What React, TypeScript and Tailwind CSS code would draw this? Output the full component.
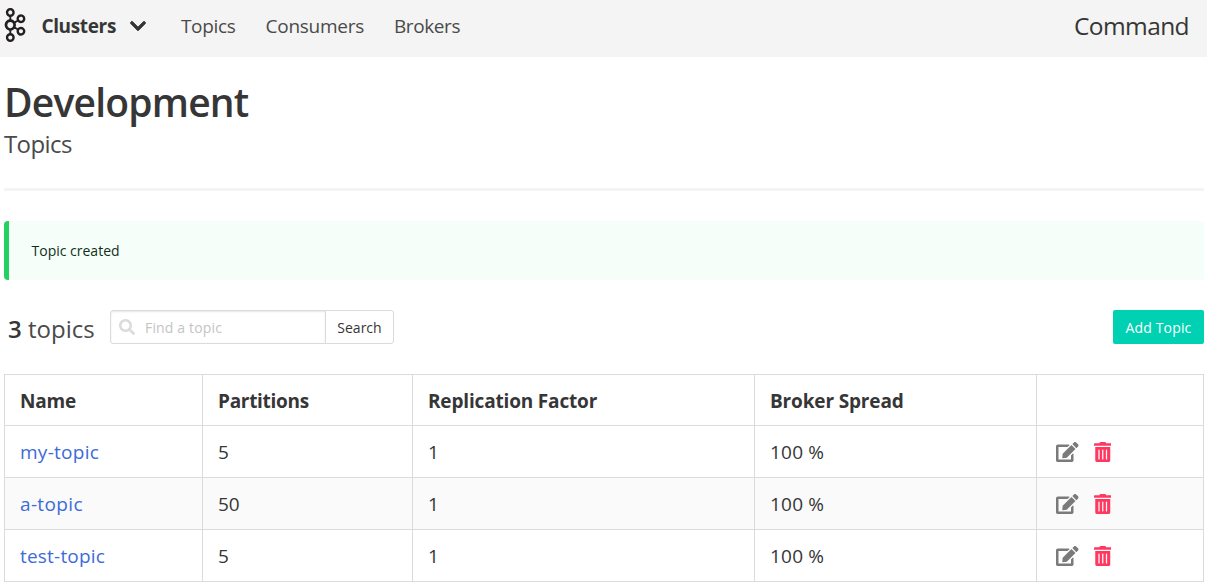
import { FaChevronDown, FaEdit, FaSearch, FaTrashAlt } from "react-icons/fa";
import { SiApachekafka } from "react-icons/si";

const topics = [
  { name: "my-topic", partitions: 5, replication: 1, spread: "100 %", link: "tracking-[0.28px]" },
  { name: "a-topic", partitions: 50, replication: 1, spread: "100 %", link: "tracking-[0.35px]" },
  { name: "test-topic", partitions: 5, replication: 1, spread: "100 %", link: "tracking-[0.2px]" },
];

function Navbar() {
  return (
    <nav className="flex h-[57px] items-center bg-[#f4f4f4] pb-[5px] text-[19px] text-[#4a4a4a]">
      <SiApachekafka className="-ml-[1.6px] mt-[-2px] size-[34px] shrink-0 text-[#231f20]" />
      <a className="ml-[9px] w-[87.6px] font-bold tracking-[-0.35px] text-[#363636]">
        <span>Clusters</span>
      </a>
      <FaChevronDown className="size-[18px] shrink-0 stroke-[#363636] stroke-[22px] text-[#363636]" />
      <a className="ml-[34px] w-[84.5px] tracking-[-0.35px]"><span>Topics</span></a>
      <a className="w-[128.5px] tracking-[-0.25px]"><span>Consumers</span></a>
      <a className="tracking-[-0.4px]"><span>Brokers</span></a>
      <span className="ml-auto mr-[18px] text-[24.5px] tracking-[-0.6px] text-[#363636]">Command</span>
    </nav>
  );
}

function Toolbar() {
  return (
    <div className="mt-[30px] flex h-[34px] items-center">
      <p className="w-[106px] pl-1 pt-[3px] text-[24px] leading-[36px] text-[#4a4a4a]">
        <span className="font-semibold text-[#363636]">3</span> <span>topics</span>
      </p>
      <div className="flex h-[34px] w-[216px] items-center rounded-l-[3px] border border-[#dbdbdb] bg-white pl-2 shadow-[inset_0_1px_2px_rgba(10,10,10,0.1)]">
        <FaSearch className="size-4 text-[#dbdbdb]" />
        <span className="ml-[10px] text-[14px] tracking-[0.15px] text-[#c4c4c4]">Find a topic</span>
      </div>
      <button className="-ml-px h-[34px] w-[69px] rounded-r-[3px] border border-[#dbdbdb] bg-white text-[14px] text-[#363636]">
        <span>Search</span>
      </button>
      <button className="ml-auto h-[34px] w-[91px] rounded-[2px] bg-[#00d1b2] text-[14px] tracking-[0.15px] text-white">
        <span>Add Topic</span>
      </button>
    </div>
  );
}

function TopicsTable() {
  return (
    <table className="mt-[30px] w-[1200px] table-fixed border-collapse text-left text-[19px] leading-[30px] text-[#363636]">
      <colgroup>
        <col className="w-[198px]" />
        <col className="w-[210px]" />
        <col className="w-[342px]" />
        <col className="w-[282px]" />
        <col />
      </colgroup>
      <thead>
        <tr className="h-[51px] font-bold [&>th]:border [&>th]:border-[#dbdbdb] [&>th]:px-[15px] [&>th]:pt-[2px]">
          <th className="tracking-[-0.2px]"><span>Name</span></th>
          <th className="tracking-[-0.3px]"><span>Partitions</span></th>
          <th className="tracking-[-0.17px]"><span>Replication Factor</span></th>
          <th className="tracking-[-0.15px]"><span>Broker Spread</span></th>
          <th />
        </tr>
      </thead>
      <tbody>
        {topics.map((t) => (
          <tr key={t.name} className="h-[52px] even:bg-[#fafafa] [&>td]:border [&>td]:border-[#dbdbdb] [&>td]:px-[15px]">
            <td><a className={"text-[#3d6bd8] " + t.link}>{t.name}</a></td>
            <td>{t.partitions}</td>
            <td>{t.replication}</td>
            <td className="tracking-[0.2px]">{t.spread}</td>
            <td>
              <div className="flex items-center gap-[15px] pl-1">
                <FaEdit className="h-5 w-[22.5px] text-[#7a7a7a]" />
                <FaTrashAlt className="h-5 w-[17.5px] text-[#ff3860]" />
              </div>
            </td>
          </tr>
        ))}
      </tbody>
    </table>
  );
}

export default function App() {
  return (
    <div className="h-[585px] overflow-hidden bg-white font-['Open_Sans','Noto_Sans',sans-serif]">
      <Navbar />
      <main className="pl-1 pr-[3px]">
        <h1 className="mt-[21px] text-[39px] font-semibold leading-[48px] tracking-[-0.8px] text-[#363636]"><span>Development</span></h1>
        <h2 className="text-[24px] leading-[36px] tracking-[-0.6px] text-[#4a4a4a]"><span>Topics</span></h2>
        <hr className="mt-[26px] h-[3px] border-0 bg-[#f4f4f4]" />
        <div className="mt-[30px] flex h-[59px] items-center rounded-[4px] border-l-[5px] border-[#23d160] bg-[#f6fef9] pl-[22.5px] text-[14px] text-[#0e301a]">
          <span>Topic created</span>
        </div>
        <Toolbar />
        <TopicsTable />
      </main>
    </div>
  );
}
